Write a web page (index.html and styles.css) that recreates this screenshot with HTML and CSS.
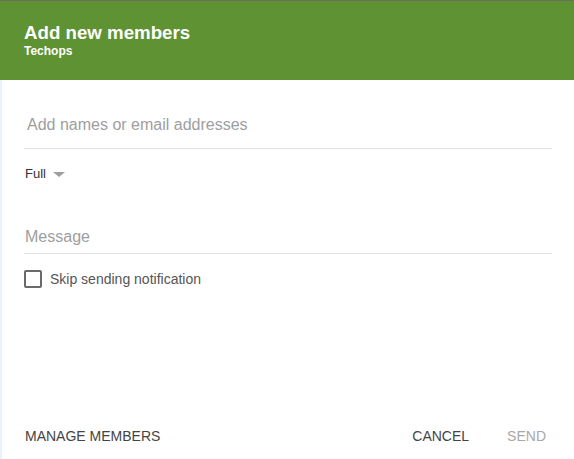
FILE: index.html
```html
<!DOCTYPE html>
<html>
<head>
<meta charset="utf-8">
<link rel="stylesheet" href="styles.css">
</head>
<body>
<div class="dialog">
  <header class="head">
    <div class="title">Add new members</div>
    <div class="subtitle">Techops</div>
  </header>
  <main class="content">
    <div class="field field-names"><span class="placeholder big">Add names or email addresses</span></div>
    <div class="role-row">
      <span class="role">Full</span>
      <span class="caret"></span>
    </div>
    <div class="field field-message"><span class="placeholder">Message</span></div>
    <label class="check-row">
      <span class="checkbox"></span>
      <span class="check-label">Skip sending notification</span>
    </label>
  </main>
  <footer class="foot">
    <span class="btn">MANAGE MEMBERS</span>
    <span class="spacer"></span>
    <span class="btn">CANCEL</span>
    <span class="btn disabled">SEND</span>
  </footer>
</div>
</body>
</html>
```
FILE: styles.css
```css
html, body {
  margin: 0;
  padding: 0;
  background: #ffffff;
}
body {
  font-family: "Liberation Sans", Arial, sans-serif;
  width: 574px;
  height: 459px;
  overflow: hidden;
}
.dialog {
  display: flex;
  flex-direction: column;
  height: 459px;
}
.head {
  background: #5e9232;
  border-top: 1px solid #6b6f5c;
  height: 80px;
  box-sizing: border-box;
  padding: 21px 25px 0 24px;
  color: #ffffff;
}
.title {
  font-size: 18.7px;
  font-weight: bold;
  line-height: 22px;
}
.subtitle {
  font-size: 12px;
  font-weight: bold;
  line-height: 15px;
  margin-top: 0px;
}
.content {
  flex: 1;
  display: flex;
  flex-direction: column;
  padding: 0 22px 0 22px;
  border-left: 2px solid #e6f1fb;
}
.field {
  display: flex;
  align-items: center;
  border-bottom: 1px solid #e0e0e0;
  box-sizing: border-box;
}
.field-names {
  margin-top: 21px;
  height: 48px;
  padding-left: 3px;
}
.field-message {
  margin-top: 24px;
  height: 33px;
  padding-left: 1px;
}
.placeholder {
  color: #9e9e9e;
  font-size: 16px;
}
.role-row {
  display: flex;
  align-items: center;
  height: 48px;
  padding-left: 1px;
}
.role {
  font-size: 13px;
  color: #333333;
}
.caret {
  width: 0;
  height: 0;
  border-left: 6px solid transparent;
  border-right: 6px solid transparent;
  border-top: 5px solid #9e9e9e;
  margin-left: 7px;
  margin-top: 2px;
}
.check-row {
  display: flex;
  align-items: center;
  margin-top: 16px;
  height: 18px;
}
.checkbox {
  width: 18px;
  height: 18px;
  box-sizing: border-box;
  border: 2px solid #6a6a6a;
  border-radius: 2px;
}
.check-label {
  margin-left: 8px;
  font-size: 14px;
  color: #555555;
}
.foot {
  display: flex;
  align-items: center;
  height: 46px;
  padding: 0 28px 0 23px;
  border-left: 2px solid #e6f1fb;
}
.btn {
  font-size: 14px;
  color: #444444;
}
.spacer {
  flex: 1;
}
.disabled {
  color: #a8a8a8;
  margin-left: 38px;
}
```
